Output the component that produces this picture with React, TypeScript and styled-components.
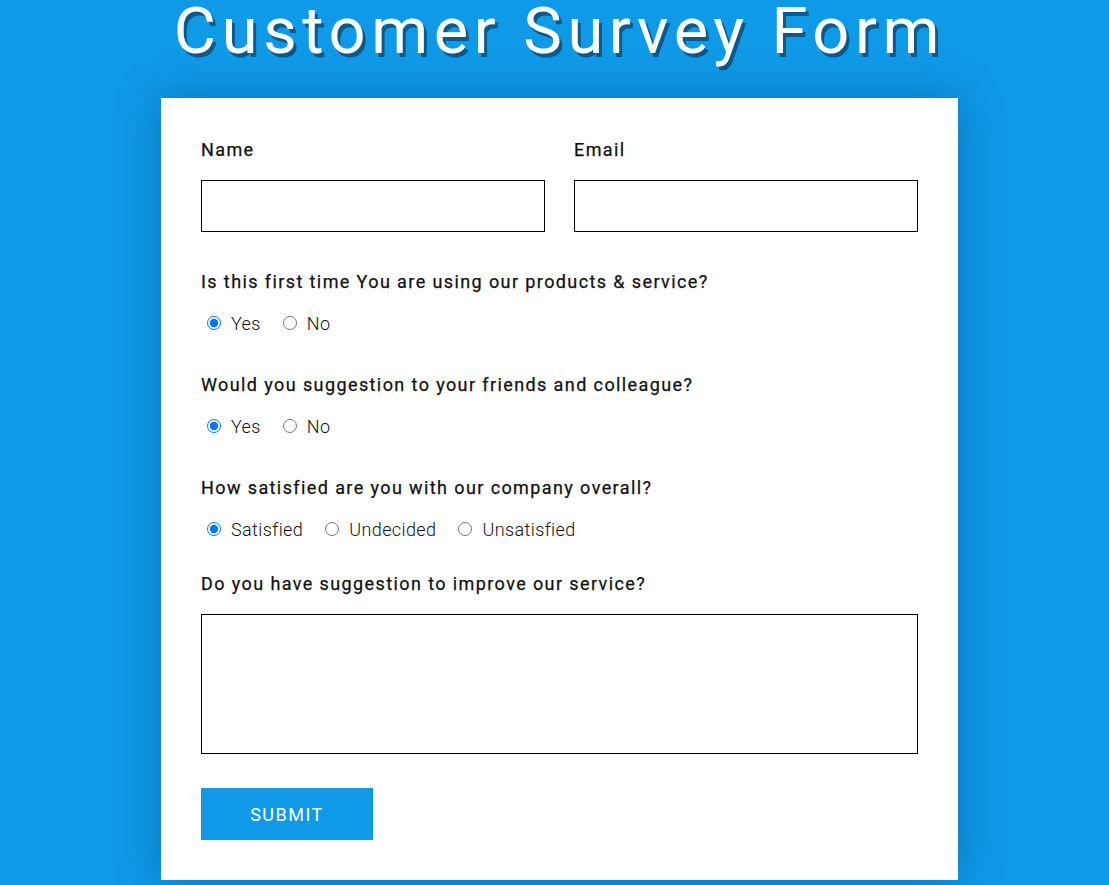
import React from "react";
import styled, { createGlobalStyle } from "styled-components";

const Global = createGlobalStyle`
  html, body { margin: 0; padding: 0; }
  body {
    background: #0f9ae8;
    font-family: Roboto, "Noto Sans", Arial, sans-serif;
    color: #111;
  }
`;

const Page = styled.div`
  display: flex;
  flex-direction: column;
  align-items: center;
  padding-left: 10px;
  min-height: 885px;
  box-sizing: border-box;
`;

const Title = styled.h1`
  margin: 0;
  height: 98px;
  box-sizing: border-box;
  font-family: Roboto, "Noto Sans", sans-serif;
  font-weight: 400;
  font-size: 65px;
  line-height: 62px;
  letter-spacing: 5.6px;
  color: #fff;
  text-shadow: 3px 4px 0 #0b5a8c;
  white-space: nowrap;
`;

const Card = styled.form`
  width: 797px;
  box-sizing: border-box;
  background: #fff;
  padding: 40px 40px 40px;
  box-shadow: 0 0 40px rgba(0, 40, 90, 0.35);
  display: flex;
  flex-direction: column;
`;

const Row = styled.div`
  display: grid;
  grid-template-columns: 344px 344px;
  column-gap: 29px;
`;

const Field = styled.div`
  display: flex;
  flex-direction: column;
`;

const Label = styled.label<{ $mb?: number }>`
  font-size: 18px;
  font-weight: 400;
  letter-spacing: 1.4px;
  line-height: 24px;
  margin-bottom: ${(p) => p.$mb ?? 18}px;
  color: #111;
  -webkit-text-stroke: 0.25px #111;
`;

const TextInput = styled.input`
  height: 52px;
  box-sizing: border-box;
  border: 1px solid #000;
  border-radius: 0;
  outline: none;
  font-size: 16px;
  padding: 0 10px;
`;

const Question = styled.div<{ $mt: number }>`
  margin-top: ${(p) => p.$mt}px;
  display: flex;
  flex-direction: column;
`;

const Options = styled.div`
  display: flex;
  align-items: center;
  gap: 22px;
  padding-left: 6px;
`;

const Option = styled.label`
  display: flex;
  align-items: center;
  gap: 10px;
  font-size: 18px;
  font-weight: 300;
  letter-spacing: 0.4px;
  color: #111;
  line-height: 24px;
`;

const Radio = styled.input`
  margin: 0;
  width: 14px;
  height: 14px;
  accent-color: #0075ff;
  position: relative;
  top: -1px;
`;

const TextArea = styled.textarea`
  height: 140px;
  box-sizing: border-box;
  border: 1px solid #000;
  border-radius: 0;
  resize: none;
  outline: none;
`;

const Submit = styled.button`
  margin-top: 34px;
  width: 172px;
  height: 52px;
  border: none;
  background: #0f9ae8;
  color: #fff;
  font-family: Roboto, "Noto Sans", sans-serif;
  font-size: 18px;
  font-weight: 400;
  letter-spacing: 1.5px;
  cursor: pointer;
`;

export default function App() {
  return (
    <Page>
      <Global />
      <Title>Customer Survey Form</Title>
      <Card onSubmit={(e) => e.preventDefault()}>
        <Row>
          <Field>
            <Label>Name</Label>
            <TextInput type="text" />
          </Field>
          <Field>
            <Label>Email</Label>
            <TextInput type="email" />
          </Field>
        </Row>
        <Question $mt={38}>
          <Label $mb={18}>Is this first time You are using our products &amp; service?</Label>
          <Options>
            <Option><Radio type="radio" name="q1" defaultChecked />Yes</Option>
            <Option><Radio type="radio" name="q1" />No</Option>
          </Options>
        </Question>
        <Question $mt={37}>
          <Label $mb={18}>Would you suggestion to your friends and colleague?</Label>
          <Options>
            <Option><Radio type="radio" name="q2" defaultChecked />Yes</Option>
            <Option><Radio type="radio" name="q2" />No</Option>
          </Options>
        </Question>
        <Question $mt={37}>
          <Label $mb={18}>How satisfied are you with our company overall?</Label>
          <Options>
            <Option><Radio type="radio" name="q3" defaultChecked />Satisfied</Option>
            <Option><Radio type="radio" name="q3" />Undecided</Option>
            <Option><Radio type="radio" name="q3" />Unsatisfied</Option>
          </Options>
        </Question>
        <Question $mt={30}>
          <Label $mb={18}>Do you have suggestion to improve our service?</Label>
          <TextArea />
        </Question>
        <Submit type="submit">SUBMIT</Submit>
      </Card>
    </Page>
  );
}
